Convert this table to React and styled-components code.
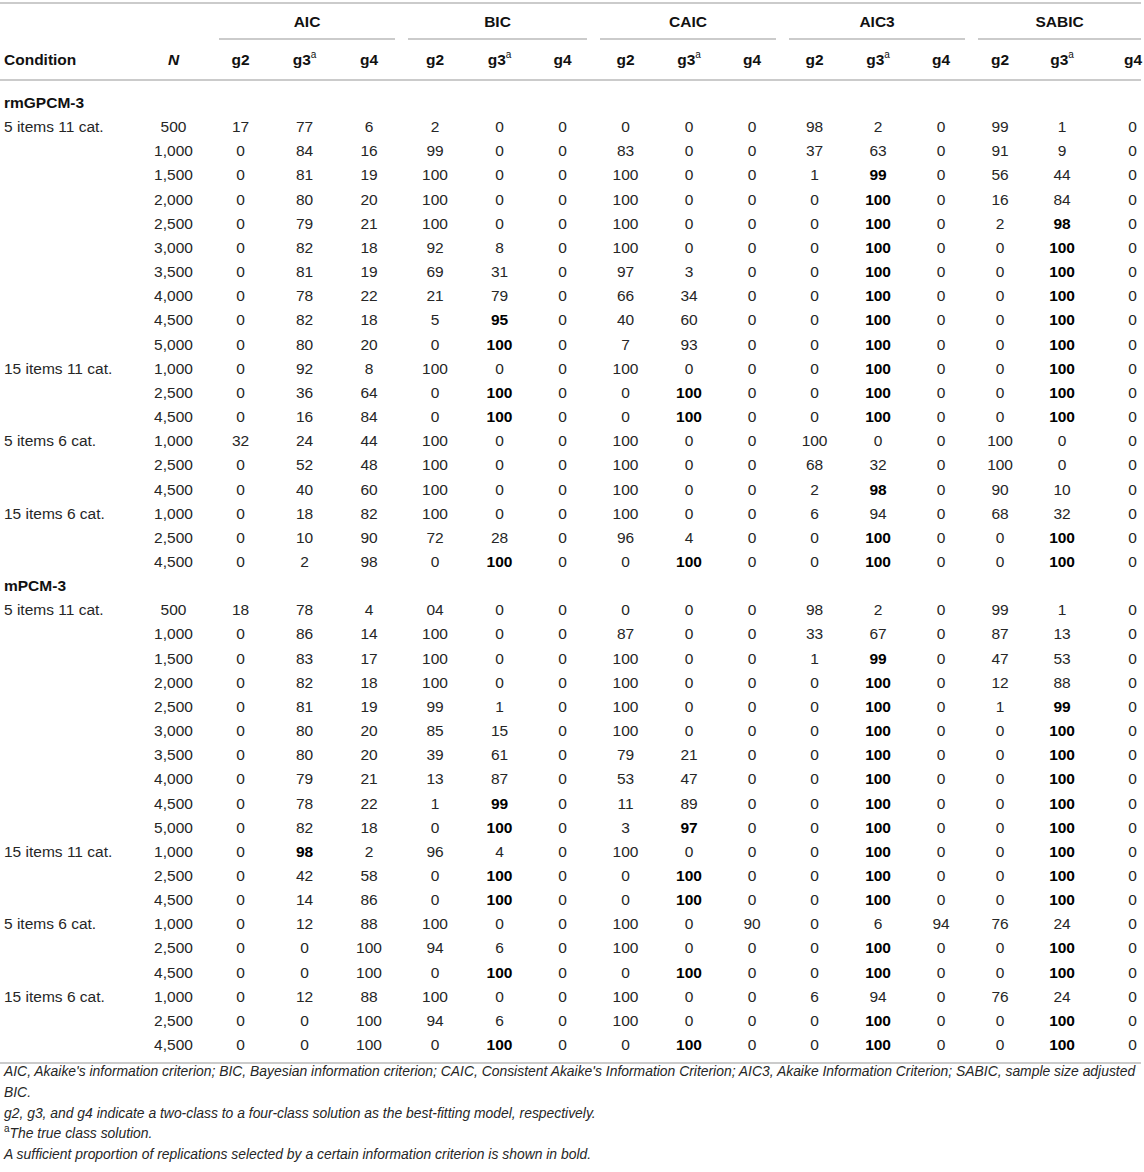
import React from "react";
import styled, { createGlobalStyle } from "styled-components";

const GlobalStyle = createGlobalStyle`
  html, body { margin: 0; padding: 0; background: #ffffff; }
  body {
    font-family: "Liberation Sans", Arial, Helvetica, sans-serif;
    color: #262626;
  }
`;

const LINE = "#cbcbcb";

const Page = styled.div`
  width: 1144px;
  padding-top: 2px;
`;

const Table = styled.table`
  width: 1141px;
  table-layout: fixed;
  border-collapse: separate;
  border-spacing: 0;
  border-top: 2px solid ${LINE};
  border-bottom: 2px solid ${LINE};
  font-size: 15.5px;
`;

const GroupHead = styled.th`
  padding: 0;
  font-weight: 700;
  color: #111;
`;

const GroupLabel = styled.div`
  margin: 0 ${(p) => (p.$last ? 0 : 7)}px 0 ${(p) => (p.$first ? 11 : 6)}px;
  padding: 6px 0 4px;
  line-height: 24px;
  border-bottom: 2px solid ${LINE};
  text-align: center;
`;

const SubHead = styled.th`
  padding: 8px 0 7px ${(p) => (p.$left ? 4 : p.$last ? 28 : 0)}px;
  line-height: 24px;
  white-space: nowrap;
  text-align: ${(p) => (p.$left ? "left" : "center")};
  font-weight: 700;
  font-style: ${(p) => (p.$italic ? "italic" : "normal")};
  color: #111;
  border-bottom: 2px solid ${LINE};
`;

const Sup = styled.sup`
  font-size: 10px;
  font-weight: 400;
  vertical-align: 7px;
  line-height: 0;
`;

const Row = styled.tr`
  &:first-child td { padding-top: 10px; }
  &:last-child td { padding-bottom: 5px; }
`;

const SectionCell = styled.td`
  padding: 0 0 0 4px;
  line-height: 24.15px;
  font-weight: 700;
  color: #111;
  text-align: left;
`;

const Cell = styled.td`
  padding: 0 0 0 ${(p) => (p.$left ? 4 : p.$last ? 28 : 0)}px;
  line-height: 24.15px;
  white-space: nowrap;
  text-align: ${(p) => (p.$left ? "left" : "center")};
  font-weight: ${(p) => (p.$bold ? 700 : 400)};
  color: ${(p) => (p.$bold ? "#000" : "#262626")};
`;

const Notes = styled.div`
  width: 1140px;
  margin-top: -3px;
  padding: 0 0 0 4px;
  font-size: 13.9px;
  font-style: italic;
  line-height: 20.7px;
  color: #262626;
`;

const Note = styled.p`
  margin: 0;
`;

const NoteSup = styled.sup`
  font-size: 10px;
  vertical-align: 6px;
  line-height: 0;
  font-style: normal;
`;

const widths = [139, 69, 65, 63, 66, 66, 63, 63, 63, 64, 62, 63, 64, 62, 56, 68, 45];
const groups = ["AIC", "BIC", "CAIC", "AIC3", "SABIC"];

const sections = [
  {
    name: "rmGPCM-3",
    rows: [
      ["5 items 11 cat.", "500", "17 77 6 2 0 0 0 0 0 98 2 0 99 1 0"],
      ["", "1,000", "0 84 16 99 0 0 83 0 0 37 63 0 91 9 0"],
      ["", "1,500", "0 81 19 100 0 0 100 0 0 1 *99 0 56 44 0"],
      ["", "2,000", "0 80 20 100 0 0 100 0 0 0 *100 0 16 84 0"],
      ["", "2,500", "0 79 21 100 0 0 100 0 0 0 *100 0 2 *98 0"],
      ["", "3,000", "0 82 18 92 8 0 100 0 0 0 *100 0 0 *100 0"],
      ["", "3,500", "0 81 19 69 31 0 97 3 0 0 *100 0 0 *100 0"],
      ["", "4,000", "0 78 22 21 79 0 66 34 0 0 *100 0 0 *100 0"],
      ["", "4,500", "0 82 18 5 *95 0 40 60 0 0 *100 0 0 *100 0"],
      ["", "5,000", "0 80 20 0 *100 0 7 93 0 0 *100 0 0 *100 0"],
      ["15 items 11 cat.", "1,000", "0 92 8 100 0 0 100 0 0 0 *100 0 0 *100 0"],
      ["", "2,500", "0 36 64 0 *100 0 0 *100 0 0 *100 0 0 *100 0"],
      ["", "4,500", "0 16 84 0 *100 0 0 *100 0 0 *100 0 0 *100 0"],
      ["5 items 6 cat.", "1,000", "32 24 44 100 0 0 100 0 0 100 0 0 100 0 0"],
      ["", "2,500", "0 52 48 100 0 0 100 0 0 68 32 0 100 0 0"],
      ["", "4,500", "0 40 60 100 0 0 100 0 0 2 *98 0 90 10 0"],
      ["15 items 6 cat.", "1,000", "0 18 82 100 0 0 100 0 0 6 94 0 68 32 0"],
      ["", "2,500", "0 10 90 72 28 0 96 4 0 0 *100 0 0 *100 0"],
      ["", "4,500", "0 2 98 0 *100 0 0 *100 0 0 *100 0 0 *100 0"],
    ],
  },
  {
    name: "mPCM-3",
    rows: [
      ["5 items 11 cat.", "500", "18 78 4 04 0 0 0 0 0 98 2 0 99 1 0"],
      ["", "1,000", "0 86 14 100 0 0 87 0 0 33 67 0 87 13 0"],
      ["", "1,500", "0 83 17 100 0 0 100 0 0 1 *99 0 47 53 0"],
      ["", "2,000", "0 82 18 100 0 0 100 0 0 0 *100 0 12 88 0"],
      ["", "2,500", "0 81 19 99 1 0 100 0 0 0 *100 0 1 *99 0"],
      ["", "3,000", "0 80 20 85 15 0 100 0 0 0 *100 0 0 *100 0"],
      ["", "3,500", "0 80 20 39 61 0 79 21 0 0 *100 0 0 *100 0"],
      ["", "4,000", "0 79 21 13 87 0 53 47 0 0 *100 0 0 *100 0"],
      ["", "4,500", "0 78 22 1 *99 0 11 89 0 0 *100 0 0 *100 0"],
      ["", "5,000", "0 82 18 0 *100 0 3 *97 0 0 *100 0 0 *100 0"],
      ["15 items 11 cat.", "1,000", "0 *98 2 96 4 0 100 0 0 0 *100 0 0 *100 0"],
      ["", "2,500", "0 42 58 0 *100 0 0 *100 0 0 *100 0 0 *100 0"],
      ["", "4,500", "0 14 86 0 *100 0 0 *100 0 0 *100 0 0 *100 0"],
      ["5 items 6 cat.", "1,000", "0 12 88 100 0 0 100 0 90 0 6 94 76 24 0"],
      ["", "2,500", "0 0 100 94 6 0 100 0 0 0 *100 0 0 *100 0"],
      ["", "4,500", "0 0 100 0 *100 0 0 *100 0 0 *100 0 0 *100 0"],
      ["15 items 6 cat.", "1,000", "0 12 88 100 0 0 100 0 0 6 94 0 76 24 0"],
      ["", "2,500", "0 0 100 94 6 0 100 0 0 0 *100 0 0 *100 0"],
      ["", "4,500", "0 0 100 0 *100 0 0 *100 0 0 *100 0 0 *100 0"],
    ],
  },
];

const bodyRows = [];
sections.forEach((s) => {
  bodyRows.push({ type: "section", name: s.name });
  s.rows.forEach((r) => bodyRows.push({ type: "data", cond: r[0], n: r[1], vals: r[2].split(" ") }));
});

export default function App() {
  return (
    <>
      <GlobalStyle />
      <Page>
        <Table>
          <colgroup>
            {widths.map((w, i) => (
              <col key={i} style={{ width: w }} />
            ))}
          </colgroup>
          <thead>
            <tr>
              <GroupHead colSpan={2} />
              {groups.map((g, gi) => (
                <GroupHead key={g} colSpan={3}>
                  <GroupLabel $first={gi === 0} $last={gi === groups.length - 1}>
                    {g}
                  </GroupLabel>
                </GroupHead>
              ))}
            </tr>
            <tr>
              <SubHead $left>Condition</SubHead>
              <SubHead $italic>N</SubHead>
              {groups.map((g, gi) => (
                <React.Fragment key={g}>
                  <SubHead>g2</SubHead>
                  <SubHead>
                    g3<Sup>a</Sup>
                  </SubHead>
                  <SubHead $last={gi === groups.length - 1}>g4</SubHead>
                </React.Fragment>
              ))}
            </tr>
          </thead>
          <tbody>
            {bodyRows.map((r, i) =>
              r.type === "section" ? (
                <Row key={i}>
                  <SectionCell colSpan={17}>{r.name}</SectionCell>
                </Row>
              ) : (
                <Row key={i}>
                  <Cell $left>{r.cond}</Cell>
                  <Cell>{r.n}</Cell>
                  {r.vals.map((v, j) => {
                    const bold = v.startsWith("*");
                    return (
                      <Cell key={j} $bold={bold} $last={j === r.vals.length - 1}>
                        {bold ? v.slice(1) : v}
                      </Cell>
                    );
                  })}
                </Row>
              )
            )}
          </tbody>
        </Table>
        <Notes>
          <Note>
            AIC, Akaike's information criterion; BIC, Bayesian information criterion; CAIC, Consistent Akaike's
            Information Criterion; AIC3, Akaike Information Criterion; SABIC, sample size adjusted BIC.
          </Note>
          <Note>g2, g3, and g4 indicate a two-class to a four-class solution as the best-fitting model, respectively.</Note>
          <Note>
            <NoteSup>a</NoteSup>The true class solution.
          </Note>
          <Note>A sufficient proportion of replications selected by a certain information criterion is shown in bold.</Note>
        </Notes>
      </Page>
    </>
  );
}
